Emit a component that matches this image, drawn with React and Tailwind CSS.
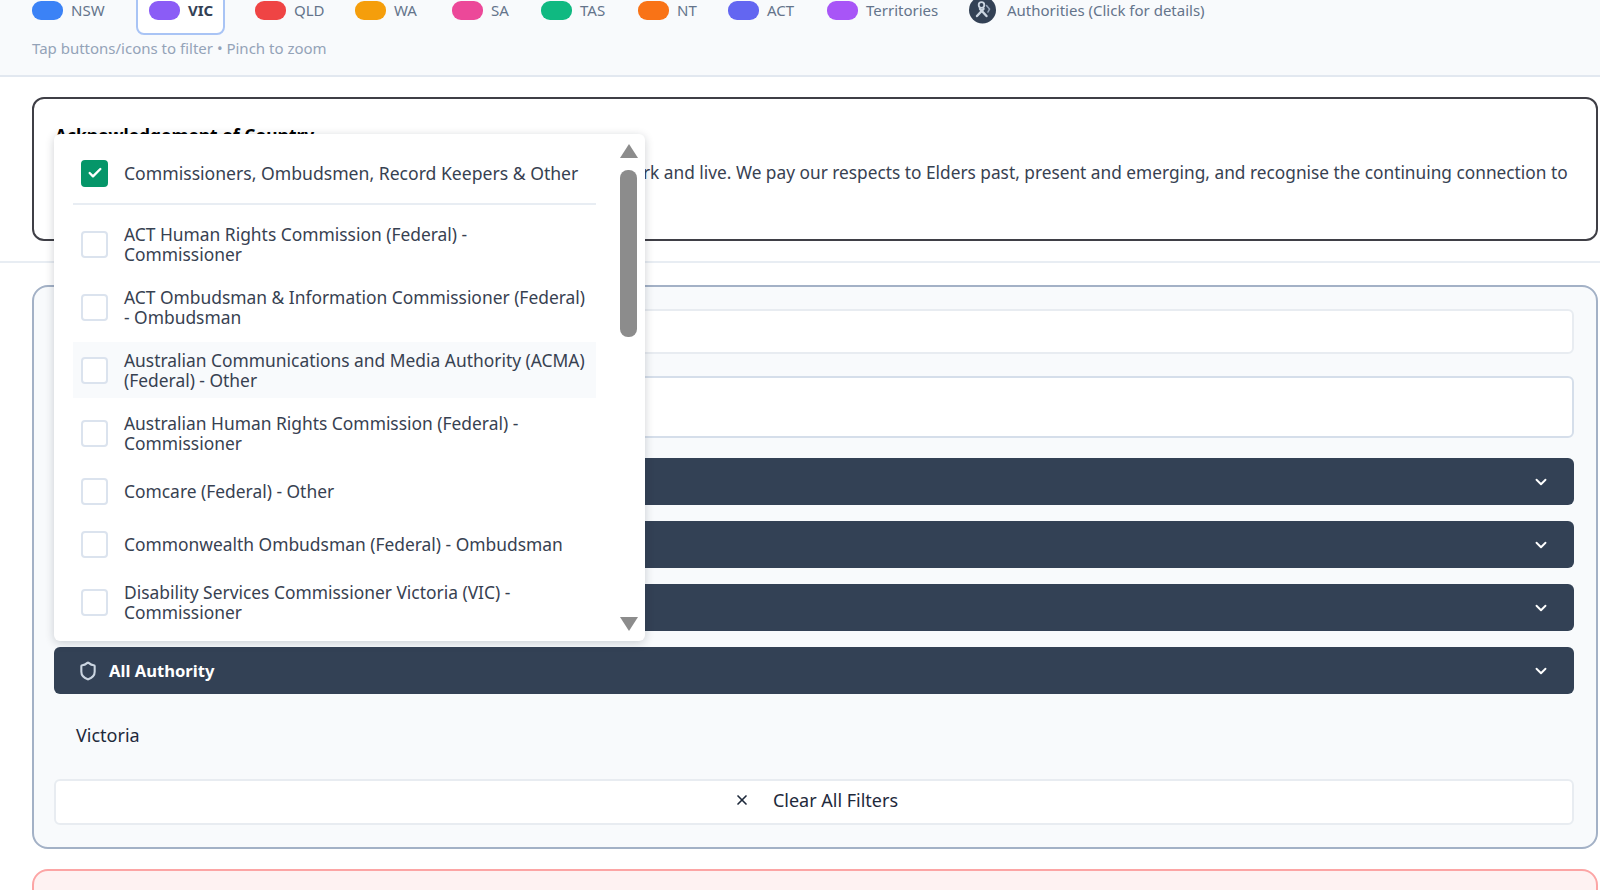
import { ChevronDown, Check, Shield, X } from "lucide-react";

const legend = [
  { label: "NSW", color: "bg-[#3b82f6]", slot: "w-[35px]" },
  { label: "VIC", color: "bg-[#8b5cf6]", slot: "w-[24px]", active: true },
  { label: "QLD", color: "bg-[#ef4444]", slot: "w-[31px]" },
  { label: "WA", color: "bg-[#f59e0b]", slot: "w-[28px]" },
  { label: "SA", color: "bg-[#ec4899]", slot: "w-[20px]" },
  { label: "TAS", color: "bg-[#10b981]", slot: "w-[28px]" },
  { label: "NT", color: "bg-[#f97316]", slot: "w-[21px]" },
  { label: "ACT", color: "bg-[#6366f1]", slot: "w-[30px]" },
  { label: "Territories", color: "bg-[#a855f7]", slot: "w-[73px]" },
];

const authorities = [
  { name: "ACT Human Rights Commission (Federal) - Commissioner" },
  { name: "ACT Ombudsman & Information Commissioner (Federal) - Ombudsman" },
  { name: "Australian Communications and Media Authority (ACMA) (Federal) - Other", hover: true },
  { name: "Australian Human Rights Commission (Federal) - Commissioner" },
  { name: "Comcare (Federal) - Other" },
  { name: "Commonwealth Ombudsman (Federal) - Ombudsman" },
  { name: "Disability Services Commissioner Victoria (VIC) - Commissioner" },
];

const Bar = ({ children }) => (
  <div className="flex h-[47px] items-center justify-between rounded-md bg-[#334155] pl-6 pr-6 text-white">
    <div className="mt-[2px] flex items-center gap-[11px]">{children}</div>
    <ChevronDown className="mt-px h-[18px] w-[18px]" strokeWidth={2.5} />
  </div>
);

const AuthorityIcon = () => (
  <svg viewBox="0 0 27 32" className="h-[32px] w-[27px]">
    <circle cx="13.5" cy="16" r="13.5" fill="#334155" />
    <circle cx="12.5" cy="11" r="2.8" fill="none" stroke="#cbd5e1" strokeWidth="1.8" />
    <path d="M8 22l6.5-7M17.5 22l-6.5-7" stroke="#cbd5e1" strokeWidth="2.4" strokeLinecap="round" />
    <path d="M17.5 11.5l3 3.5-1.5 3" fill="none" stroke="#94a3b8" strokeWidth="1.6" strokeLinecap="round" />
  </svg>
);

const Box = ({ checked }) => (
  <span
    className={`flex h-[27px] w-[27px] shrink-0 items-center justify-center rounded-[4px] border-2 ${
      checked ? "border-[#059669] bg-[#059669]" : "border-[#dbe3ee] bg-white"
    }`}
  >
    {checked && <Check className="h-4 w-4 text-white" strokeWidth={3.5} />}
  </span>
);

export default function App() {
  return (
    <div className="relative h-[890px] overflow-hidden bg-white font-['Noto_Sans',sans-serif] text-[17.4px]">
      <header className="flow-root h-[77px] border-b-2 border-[#e2e8f0] bg-[#f8fafc] px-8">
        <div className="-mt-[15px] flex h-[50px] items-center gap-[30px] text-[15px] text-[#64748b]">
          {legend.map((item) => (
            <div
              key={item.label}
              className={`flex items-center gap-2 ${
                item.active
                  ? "h-[50px] rounded-lg border-2 border-[#a9c4f5] bg-white px-[11px] font-bold text-[#334155]"
                  : ""
              }`}
            >
              <span className={`h-[19px] w-[31px] rounded-[9px] ${item.color}`} />
              <span className={`whitespace-nowrap ${item.slot}`}>{item.label}</span>
            </div>
          ))}
          <div className="flex items-center gap-[11px]">
            <AuthorityIcon />
            <span>Authorities (Click for details)</span>
          </div>
        </div>
        <p className="mt-[3px] text-[15px] leading-5 text-[#94a3b8]">Tap buttons/icons to filter • Pinch to zoom</p>
      </header>

      <section className="border-b-2 border-[#e8edf3] pl-8 pr-[2px] pt-5 pb-5">
        <div className="h-[144px] rounded-xl border-2 border-[#3f3f46] bg-white px-[21px] pt-[24px]">
          <h2 className="font-bold leading-6 text-black">Acknowledgement of Country</h2>
          <p className="mt-[14px] text-[17.3px] leading-6 text-[#374151]">
            We acknowledge the Traditional Custodians of the lands on which we work and live. We pay our respects to Elders past, present and emerging, and recognise the continuing connection to Country.
          </p>
        </div>
      </section>

      <div className="pl-8 pr-[2px] pt-[22px]">
        <div className="flex h-[564px] flex-col rounded-2xl border-2 border-[#a3b1c6] bg-[#f8fafc] pl-[20px] pr-[22px] pt-[22px]">
          <div className="h-[45px] rounded-md border-2 border-[#e8ecf1] bg-white" />
          <div className="mt-[22px] h-[62px] rounded-md border-2 border-[#d5deea] bg-white" />
          <div className="mt-[20px] flex flex-col gap-4">
            <Bar />
            <Bar />
            <Bar />
            <Bar>
              <Shield className="h-5 w-5 text-[#cbd5e1]" strokeWidth={2.5} />
              <span className="text-[16.6px] font-bold">All Authority</span>
            </Bar>
          </div>
          <p className="mt-[29px] pl-[22px] text-[18px] leading-6 text-[#1e293b]">Victoria</p>
          <button className="mt-[32px] flex h-[46px] items-center justify-center gap-[23px] rounded-md border-2 border-[#e8ecf1] bg-white pb-[4px] pl-[4px] text-[18px] text-[#1e293b]">
            <X className="h-4 w-4" strokeWidth={2.5} />
            <span>Clear All Filters</span>
          </button>
        </div>
        <div className="mt-[20px] h-[60px] rounded-2xl border-2 border-[#fca5a5] bg-[#fef2f2]" />
      </div>

      <div className="absolute left-[54px] top-[134px] h-[507px] w-[591px] overflow-hidden rounded-md bg-white shadow-[0_2px_10px_rgba(15,23,42,0.2)]">
        <div className="pl-[19px] pr-[49px]">
          <div className="flex h-[71px] items-center gap-[16px] border-b-2 border-[#e8edf3] pl-2 pt-[9px]">
            <Box checked />
            <span className="text-[17.6px] leading-5 text-[#374151]">Commissioners, Ombudsmen, Record Keepers &amp; Other</span>
          </div>
          <ul className="mt-[11px] flex flex-col gap-[7px]">
            {authorities.map((a) => (
              <li
                key={a.name}
                className={`flex min-h-[46px] items-center gap-[16px] py-2 pl-2 pr-1 leading-5 text-[#374151] ${
                  a.hover ? "bg-[#f8fafc]" : ""
                }`}
              >
                <Box />
                <span className="max-w-[464px]">{a.name}</span>
              </li>
            ))}
          </ul>
        </div>
        <div className="absolute right-2 top-0 flex h-full w-[17px] flex-col items-center justify-between py-[10px]">
          <span className="h-0 w-0 border-x-[9px] border-b-[14px] border-x-transparent border-b-[#8c8c8c]" />
          <span className="absolute top-[36px] h-[167px] w-[17px] rounded-lg bg-[#8c8c8c]" />
          <span className="h-0 w-0 border-x-[9px] border-t-[14px] border-x-transparent border-t-[#8c8c8c]" />
        </div>
      </div>
    </div>
  );
}
